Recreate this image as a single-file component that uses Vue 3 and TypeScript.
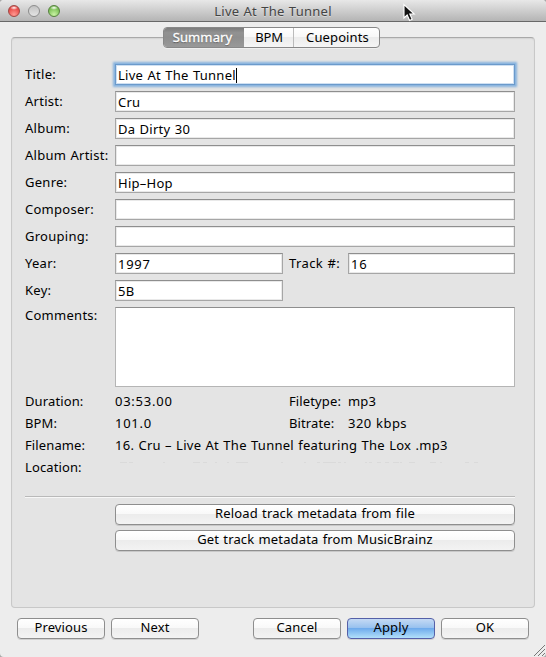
<script setup lang="ts">
interface Field {
  label: string
  value: string
  focused?: boolean
}

const fields: Field[] = [
  { label: 'Title:', value: 'Live At The Tunnel', focused: true },
  { label: 'Artist:', value: 'Cru' },
  { label: 'Album:', value: 'Da Dirty 30' },
  { label: 'Album Artist:', value: '' },
  { label: 'Genre:', value: 'Hip–Hop' },
  { label: 'Composer:', value: '' },
  { label: 'Grouping:', value: '' },
]

// Visible tops of the path text whose lower part is hidden.
const pathMarks: [number, number][] = [
  [5, 7], [14, 4], [48, 2], [78, 7], [88, 4], [100, 2], [112, 2], [121, 12],
  [166, 2], [189, 2], [202, 3], [208, 13], [223, 3], [229, 2], [250, 2], [254, 3], [262, 4], [270, 4],
  [278, 6], [285, 2], [294, 6], [315, 6], [325, 2], [350, 4], [359, 4],
]
</script>

<template>
  <div class="window">
    <header class="titlebar">
      <div class="lights"><i class="light red" /><i class="light grey" /><i class="light green" /></div>
      <h1>Live At The Tunnel</h1>
      <svg class="pointer" width="14" height="19" viewBox="0 0 14 19">
        <path d="M2 1.5V15l3.2-3 2.4 5.4 2.6-1.2L7.8 11h4.4z" fill="#111" stroke="#fff" stroke-width="1.1" />
      </svg>
    </header>

    <nav class="tabs">
      <button class="tab selected">Summary</button>
      <button class="tab bpm">BPM</button>
      <button class="tab cues">Cuepoints</button>
    </nav>

    <main class="panel">
      <div v-for="f in fields" :key="f.label" class="row">
        <label>{{ f.label }}</label>
        <div class="input wide" :class="{ focused: f.focused }">
          <span>{{ f.value }}</span><i v-if="f.focused" class="caret" />
        </div>
      </div>
      <div class="row">
        <label>Year:</label>
        <div class="input digits"><span>1997</span></div>
        <label class="second">Track #:</label>
        <div class="input track digits"><span>16</span></div>
      </div>
      <div class="row">
        <label>Key:</label>
        <div class="input"><span>5B</span></div>
      </div>
      <div class="row comments">
        <label>Comments:</label>
        <div class="textarea" />
      </div>

      <dl class="info">
        <dt>Duration:</dt><dd class="digits">03:53.00</dd><dt>Filetype:</dt><dd>mp3</dd>
        <dt>BPM:</dt><dd class="digits">101.0</dd><dt>Bitrate:</dt><dd class="rate">320 kbps</dd>
        <dt>Filename:</dt><dd class="span file">16. Cru – Live At The Tunnel featuring The Lox .mp3</dd>
        <dt>Location:</dt>
        <dd class="span">
          <svg class="path" width="370" height="22" viewBox="0 0 370 22">
            <rect v-for="m in pathMarks" :key="m[0]" :x="m[0]" y="6" :width="m[1]" height="1" />
          </svg>
        </dd>
      </dl>

      <hr>
      <div class="actions">
        <button class="btn">Reload track metadata from file</button>
        <button class="btn">Get track metadata from MusicBrainz</button>
      </div>
    </main>

    <footer>
      <button class="btn">Previous</button>
      <button class="btn">Next</button>
      <span class="spacer" />
      <button class="btn">Cancel</button>
      <button class="btn primary">Apply</button>
      <button class="btn">OK</button>
    </footer>
    <svg class="grip" width="13" height="13" viewBox="0 0 13 13">
      <path d="M1 12L12 1M5 12L12 5M9 12L12 9" stroke="#777" fill="none" />
    </svg>
  </div>
</template>

<style>
body {
  background: #a8a8a8;
  overflow: hidden;
}
</style>

<style scoped>
.window {
  position: relative;
  box-sizing: border-box;
  width: 546px;
  height: 657px;
  display: flex;
  flex-direction: column;
  background: #ededed;
  border-radius: 4px;
  overflow: hidden;
  font-family: "Noto Sans", sans-serif;
  font-size: 13px;
  letter-spacing: .12px;
  word-spacing: .6px;
  color: #000;
}
.titlebar {
  position: relative;
  box-sizing: border-box;
  flex: none;
  height: 22px;
  background: linear-gradient(#e8e8e8, #b4b4b4);
  border-bottom: 1px solid #686868;
}
h1 {
  margin: 0;
  font-size: 13px;
  font-weight: 400;
  line-height: 22px;
  letter-spacing: .25px;
  text-align: center;
  color: #444;
  text-shadow: 0 1px 0 rgba(255, 255, 255, .4);
}
.lights {
  position: absolute;
  left: 8px;
  top: 5px;
  display: flex;
  gap: 8px;
}
.light {
  box-sizing: border-box;
  width: 12px;
  height: 12px;
  border-radius: 50%;
}
.red {
  border: 1px solid #9f4844;
  background: radial-gradient(ellipse 4px 2px at 50% 18%, #fff 0, rgba(255, 255, 255, 0) 100%), radial-gradient(circle at 50% 85%, #ff9a92, #e5413e 75%);
}
.grey {
  border: 1px solid #8c8c8c;
  background: linear-gradient(#c2c2c2, #e4e4e4);
}
.green {
  border: 1px solid #56813f;
  background: radial-gradient(ellipse 4px 2px at 50% 18%, #fff 0, rgba(255, 255, 255, 0) 100%), radial-gradient(circle at 50% 85%, #c9f3a4, #71b94b 75%);
}
.pointer {
  position: absolute;
  left: 402px;
  top: 3px;
}
button {
  margin: 0;
  padding: 0;
  font: inherit;
  letter-spacing: inherit;
  word-spacing: inherit;
  color: inherit;
}
.tabs {
  position: relative;
  z-index: 1;
  flex: none;
  box-sizing: border-box;
  display: flex;
  width: 217px;
  height: 21px;
  margin: 5px 0 0 163px;
  border: 1px solid #888;
  border-radius: 4px;
  background: linear-gradient(#fff, #f8f8f8 45%, #ececec 50%, #f6f6f6);
  box-shadow: 0 1px 0 rgba(255, 255, 255, .4);
  overflow: hidden;
}
.tab {
  border: 0;
  background: none;
  line-height: 19px;
}
.selected {
  width: 80px;
  padding-right: 3px;
  color: #fff;
  background: linear-gradient(#7c7c7c, #929292 25%, #8e8e8e 50%, #999);
  text-shadow: 0 1px 1px #555;
  -webkit-text-stroke: .3px #fff;
}
.bpm {
  width: 50px;
  padding-left: 1px;
  letter-spacing: -.2px;
  border-right: 1px solid #bbb;
}
.cues {
  flex: 1;
  padding-left: 2px;
}
.panel {
  flex: none;
  box-sizing: border-box;
  height: 571px;
  margin: -11px 11px 0;
  padding: 26px 19px 0 13px;
  border: 1px solid #c8c8c8;
  border-top-color: #a9a9a9;
  border-radius: 4px;
  background: #e4e4e4;
  box-shadow: inset 0 1px 1px #d4d4d4;
}
.row {
  display: flex;
  height: 21px;
  margin-bottom: 6px;
}
label {
  width: 90px;
  flex: none;
  line-height: 21px;
  letter-spacing: .27px;
  white-space: nowrap;
}
.second {
  width: 59px;
  margin-left: 6px;
  letter-spacing: .4px;
}
.input {
  box-sizing: border-box;
  display: flex;
  align-items: center;
  width: 168px;
  height: 21px;
  padding: 1px 0 0 2px;
  border: 1px solid #a6a6a6;
  border-top-color: #8e8e8e;
  background: #fff;
  box-shadow: inset 0 0 0 1px #e9e9e9;
  line-height: 18px;
  letter-spacing: .27px;
  white-space: nowrap;
}
.wide {
  width: 400px;
}
.track {
  width: 167px;
}
.digits {
  letter-spacing: .75px;
}
.focused {
  border-color: #6b9acb;
  box-shadow: 0 0 2px 2px #86b2de, inset 0 0 0 1px #cfe0f2;
}
.caret {
  width: 1px;
  height: 15px;
  background: #000;
}
.comments {
  height: 80px;
  margin-bottom: 3px;
}
.comments label {
  line-height: 17px;
}
.textarea {
  box-sizing: border-box;
  width: 400px;
  height: 80px;
  border: 1px solid #b5b5b5;
  border-top-color: #8e8e8e;
  background: #fff;
}
.info {
  display: grid;
  grid-template-columns: 90px 174px 59px 167px;
  grid-auto-rows: 22px;
  margin: 0;
  line-height: 22px;
  white-space: nowrap;
}
dd {
  margin: 0;
}
.rate {
  letter-spacing: .45px;
}
.span {
  grid-column: span 3;
}
.file {
  letter-spacing: .27px;
}
.path {
  display: block;
  fill: #dadada;
}
hr {
  height: 1px;
  margin: 18px 0 7px;
  border: 0;
  background: #b9b9b9;
  box-shadow: 0 1px 0 #f7f7f7;
}
.actions {
  display: flex;
  flex-direction: column;
  gap: 5px;
  padding-left: 90px;
}
.btn {
  box-sizing: border-box;
  width: 88px;
  height: 21px;
  padding-bottom: 2px;
  border: 1px solid #8e8e8e;
  border-radius: 4px;
  background: linear-gradient(#fff, #f9f9f9 45%, #ececec 50%, #f3f3f3);
  box-shadow: 0 1px 0 rgba(0, 0, 0, .12);
  line-height: 17px;
  white-space: nowrap;
}
.actions .btn {
  width: 400px;
  letter-spacing: .16px;
}
.primary {
  border-color: #5560a8;
  background: linear-gradient(#c5daf4, #99c2ef 45%, #6fabec 50%, #b2e0fa);
}
footer {
  flex: none;
  display: flex;
  gap: 6px;
  padding: 10px 17px 0;
}
.spacer {
  flex: 1;
}
.grip {
  position: absolute;
  right: 0;
  bottom: 0;
}
</style>
